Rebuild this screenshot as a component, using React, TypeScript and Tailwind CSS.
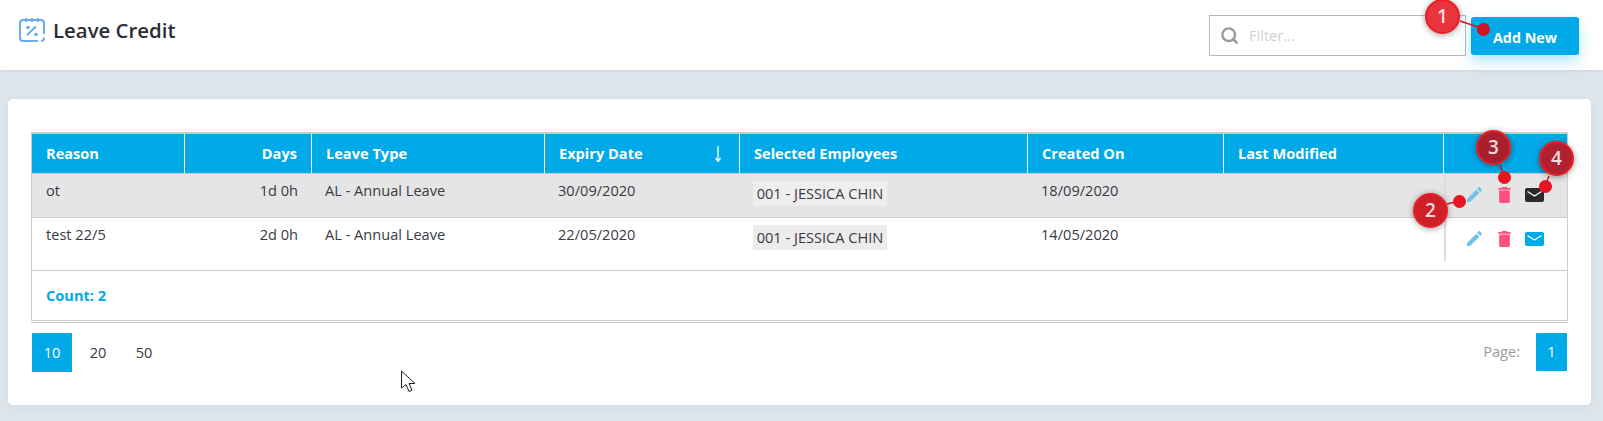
import { Search } from 'lucide-react';

const columns = 'grid grid-cols-[153px_127px_233px_195px_288px_196px_220px_1fr]';

const rows = [
  { reason: 'ot', days: '1d 0h', type: 'AL - Annual Leave', expiry: '30/09/2020', created: '18/09/2020', active: true },
  { reason: 'test 22/5', days: '2d 0h', type: 'AL - Annual Leave', expiry: '22/05/2020', created: '14/05/2020', active: false },
];

function HeaderCell({ label, right, last }: { label?: string; right?: boolean; last?: boolean }) {
  return (
    <div className={`flex h-[39px] items-center px-[14px] font-bold text-white ${right ? 'justify-end' : ''} ${last ? '' : 'border-r border-white'}`}>
      {label}
    </div>
  );
}

function CalendarIcon() {
  return (
    <svg width="26" height="26" viewBox="0 0 26 26" fill="none" stroke="#66aef0" strokeWidth="2">
      <path d="M19 24H4a3 3 0 0 1-3-3V6a3 3 0 0 1 3-3h18a3 3 0 0 1 3 3v11" />
      <path d="M25 20.5v.5a3 3 0 0 1-3 3" />
      <path d="M7 1v4M13 1v4M19 1v4" strokeWidth="1.6" />
      <path d="M8 18 17 9.5" strokeWidth="2" />
      <circle cx="9" cy="10.5" r="1.8" fill="#66aef0" stroke="none" />
      <circle cx="17" cy="17.5" r="1.8" fill="#66aef0" stroke="none" />
    </svg>
  );
}

function EditIcon() {
  return (
    <svg width="15" height="15" viewBox="3 3 18 18" fill="#6cc4ea">
      <path d="M3 17.25V21h3.75L17.81 9.94l-3.75-3.75L3 17.25zM20.71 7.04c.39-.39.39-1.02 0-1.41l-2.34-2.34c-.39-.39-1.02-.39-1.41 0l-1.83 1.83 3.75 3.75 1.83-1.83z" />
    </svg>
  );
}

function TrashIcon() {
  return (
    <svg width="13" height="16" viewBox="5 3 14 18" fill="#ff4f7b">
      <path d="M6 19c0 1.1.9 2 2 2h8c1.1 0 2-.9 2-2V7H6v12zM19 4h-3.5l-1-1h-5l-1 1H5v2h14V4z" />
    </svg>
  );
}

function MailIcon({ color }: { color: string }) {
  return (
    <svg width="19" height="14" viewBox="0 0 19 14" fill="none">
      <rect width="19" height="14" rx="2" fill={color} />
      <path d="M2.5 3.5 9.5 8l7-4.5" stroke="white" strokeWidth="1.3" />
    </svg>
  );
}

function Badge({ n, className }: { n: number; className: string }) {
  return (
    <div className={`absolute flex h-[35px] w-[35px] items-center justify-center rounded-full border-2 border-[#ee1c25] text-[19px] font-semibold text-[#f6dcdc] shadow-[0_1px_6px_rgba(0,0,0,0.4)] ${className}`}>
      {n}
    </div>
  );
}

function Dot({ className }: { className: string }) {
  return <div className={`absolute h-[13px] w-[13px] rounded-full ${className}`} />;
}

export default function App() {
  return (
    <div className="relative h-[421px] w-[1603px] overflow-hidden bg-[#dde4ec] font-['Open_Sans',sans-serif] text-[14.6px] text-[#3a3a44]">
      <header className="flex h-[70px] items-start justify-between bg-white pl-[19px] pr-[24px] shadow-[0_1px_3px_rgba(0,0,0,0.06)]">
        <div className="flex items-center gap-[8px] pt-[15px]">
          <CalendarIcon />
          <h1 className="text-[20.4px] font-semibold text-[#2c2c38]">Leave Credit</h1>
        </div>
        <div className="flex items-start gap-[5px] pt-[15px]">
          <div className="flex h-[41px] w-[257px] items-center gap-[10px] border border-[#b8b8b8] pl-[10px]">
            <Search size={19} strokeWidth={3} className="text-[#9a9a9a]" />
            <span className="pt-[1px] text-[#cfcfcf]">Filter...</span>
          </div>
          <button className="mt-[2px] h-[38px] w-[108px] rounded-[3px] bg-[#00a9e8] pt-[3px] text-[14.3px] font-bold text-white shadow-[0_6px_14px_rgba(0,169,232,0.3)]">
            Add New
          </button>
        </div>
      </header>

      <main className="ml-[8px] mt-[29px] h-[306px] w-[1583px] rounded-[5px] bg-white pl-[23px] pt-[33px] shadow-[0_2px_8px_rgba(0,0,0,0.04)]">
        <div className="w-[1537px] border-x border-t-2 border-[#cccccc]">
          <div className={`${columns} bg-[#00a9e8]`}>
            <HeaderCell label="Reason" />
            <HeaderCell label="Days" right />
            <HeaderCell label="Leave Type" />
            <div className="flex h-[39px] items-center justify-between border-r border-white pl-[14px] pr-[16px] font-bold text-white">
              Expiry Date
              <svg width="10" height="18" viewBox="0 0 10 18" fill="none" stroke="white" strokeWidth="1.3">
                <path d="M5 1v15M2.5 13 5 16.5 7.5 13" />
              </svg>
            </div>
            <HeaderCell label="Selected Employees" />
            <HeaderCell label="Created On" />
            <HeaderCell label="Last Modified" />
            <HeaderCell last />
          </div>

          {rows.map((row) => (
            <div
              key={row.reason}
              className={`${columns} border-t border-[#cccccc] ${row.active ? 'h-[44px] bg-[#e5e5e5]' : 'h-[54px] border-b bg-white'}`}
            >
              <div className="px-[14px] pt-[6px]">{row.reason}</div>
              <div className="px-[14px] pt-[6px] text-right">{row.days}</div>
              <div className="px-[13px] pt-[6px]">{row.type}</div>
              <div className="px-[13px] pt-[6px]">{row.expiry}</div>
              <div className="px-[13px] pt-[7px]">
                <span className={`inline-block h-[25px] w-[134px] text-center leading-[25px] ${row.active ? 'bg-[#eeeeee]' : 'bg-[#ececec]'}`}>
                  001 - JESSICA CHIN
                </span>
              </div>
              <div className="px-[13px] pt-[6px]">{row.created}</div>
              <div />
              <div className={`flex items-start border-l-2 border-[#dddddd] pl-[21px] pt-[13px] ${row.active ? '' : 'mb-[9px]'}`}>
                <EditIcon />
                <div className="ml-[16px]">
                  <TrashIcon />
                </div>
                <div className="ml-[14px] mt-[1px]">
                  <MailIcon color={row.active ? '#2a2a2a' : '#00a9e8'} />
                </div>
              </div>
            </div>
          ))}

          <div className="flex h-[50px] items-center border-b border-[#cccccc] px-[14px] font-bold text-[#00a9e8]">
            Count: 2
          </div>
        </div>

        <div className="mt-[1px] w-[1537px] border-t border-[#cccccc] pl-[1px] pr-[1px] pt-[10px]">
          <div className="flex items-start justify-between">
            <div className="flex items-center">
              <div className="flex h-[39px] w-[40px] items-center justify-center rounded-[1px] bg-[#00a9e8] text-white">10</div>
              <div className="ml-[3px] flex h-[39px] w-[46px] items-center justify-center">20</div>
              <div className="flex h-[39px] w-[46px] items-center justify-center">50</div>
            </div>
            <div className="flex items-center gap-[16px]">
              <span className="text-[#9a9a9a]">Page:</span>
              <div className="flex h-[38px] w-[31px] items-center justify-center rounded-[1px] bg-[#00a9e8] text-white">1</div>
            </div>
          </div>
        </div>
      </main>

      {/* callouts */}
      <svg className="absolute left-0 top-0" width="1603" height="421" fill="none" stroke="#e0141f" strokeWidth="1.5">
        <path d="M1460 21 1484 29M1447 204 1459 201M1500 165 1504 177M1549 176 1545 186" />
      </svg>
      <Dot className="left-[1477px] top-[23px] bg-[#d0141f]" />
      <Dot className="left-[1453px] top-[195px] bg-[#e8141f]" />
      <Dot className="left-[1498px] top-[171px] bg-[#e8141f]" />
      <Dot className="left-[1539px] top-[180px] bg-[#e8141f]" />
      <Badge n={1} className="left-[1425px] top-[-1px] bg-[#e8343c]" />
      <Badge n={2} className="left-[1413px] top-[193px] bg-[#cf2028]" />
      <Badge n={3} className="left-[1476px] top-[130px] bg-[#a8202e]" />
      <Badge n={4} className="left-[1539px] top-[141px] bg-[#b02030]" />

      {/* mouse cursor */}
      <svg className="absolute left-[400px] top-[370px]" width="17" height="25" viewBox="0 0 17 25" fill="white" stroke="#222222" strokeWidth="1">
        <path d="M1.5 1v17l4.5-3.5 3 7 3-1.3-3-6.7h6z" />
      </svg>
    </div>
  );
}
